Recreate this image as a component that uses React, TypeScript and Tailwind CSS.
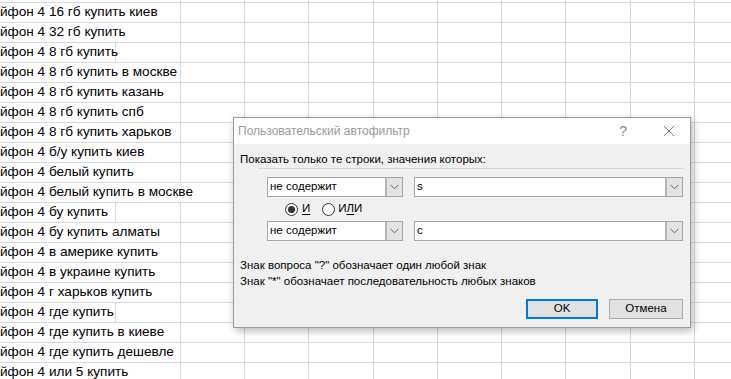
import React from "react";

const ROWS: { t: string; span: 1 | 2 | 3 }[] = [
  { t: "йфон 4 16 гб купить", span: 2 },
  { t: "йфон 4 16 гб купить киев", span: 2 },
  { t: "йфон 4 32 гб купить", span: 2 },
  { t: "йфон 4 8 гб купить", span: 1 },
  { t: "йфон 4 8 гб купить в москве", span: 2 },
  { t: "йфон 4 8 гб купить казань", span: 2 },
  { t: "йфон 4 8 гб купить спб", span: 2 },
  { t: "йфон 4 8 гб купить харьков", span: 2 },
  { t: "йфон 4 б/у купить киев", span: 2 },
  { t: "йфон 4 белый купить", span: 2 },
  { t: "йфон 4 белый купить в москве", span: 3 },
  { t: "йфон 4 бу купить", span: 1 },
  { t: "йфон 4 бу купить алматы", span: 2 },
  { t: "йфон 4 в америке купить", span: 2 },
  { t: "йфон 4 в украине купить", span: 2 },
  { t: "йфон 4 г харьков купить", span: 2 },
  { t: "йфон 4 где купить", span: 1 },
  { t: "йфон 4 где купить в киеве", span: 2 },
  { t: "йфон 4 где купить дешевле", span: 2 },
  { t: "йфон 4 или 5 купить", span: 2 },
];

// widths of the columns after A (B, C, D ...)
const COLS = ["w-[65px]", "w-[64px]", "w-[64px]", "w-[65px]", "w-[64px]", "w-[64px]", "w-[64px]", "w-[65px]", "w-[64px]", "w-[64px]"];
const FIRST: Record<number, string> = { 1: "w-[116px]", 2: "w-[181px]", 3: "w-[245px]" };

function Chevron() {
  return (
    <svg width="9" height="6" viewBox="0 0 9 6" fill="none">
      <path d="M0.5 0.8 L4.5 4.8 L8.5 0.8" stroke="#606060" strokeWidth="1" />
    </svg>
  );
}

function Combo({ value, w }: { value: string; w: string }) {
  return (
    <div className={`flex h-[20px] ${w} border border-[#a6a6a6] bg-white`}>
      <div className="flex flex-1 items-center pl-[2px] text-[11.5px] leading-none text-black">{value}</div>
      <div className="flex w-[17px] items-center justify-center border-l-2 border-[#b4b4b4] bg-[#e3e3e3]">
        <Chevron />
      </div>
    </div>
  );
}

function Radio({ on }: { on?: boolean }) {
  return (
    <span className="flex h-[13px] w-[13px] items-center justify-center rounded-full border border-[#333] bg-white">
      {on && <span className="h-[7px] w-[7px] rounded-full bg-[#333]" />}
    </span>
  );
}

export default function App() {
  return (
    <div className="relative h-[379px] w-[731px] overflow-hidden bg-white">
      <div className="-mt-[17px]" style={{ fontFamily: "'Liberation Sans', Arial, sans-serif" }}>
        {ROWS.map((r, i) => (
          <div key={i} className="flex h-[20px] border-b border-[#d3d8e4]">
            <div className={`${FIRST[r.span]} shrink-0 border-r border-[#d3d8e4] flex items-end pb-[2px] text-[13.6px] leading-[16px] text-black whitespace-nowrap`}>
              {r.t}
            </div>
            {COLS.slice(r.span - 1).map((c, j) => (
              <div key={j} className={`${c} shrink-0 border-r border-[#d3d8e4]`} />
            ))}
          </div>
        ))}
      </div>

      <div
        className="absolute left-[233px] top-[117px] flex h-[211px] w-[458px] flex-col border border-[#9a9a9a] bg-[#f0f0f0] shadow-[2px_3px_8px_rgba(0,0,0,0.28)]"
        style={{ fontFamily: "'Liberation Sans', Arial, sans-serif" }}
      >
        <div className="flex h-[26px] items-center bg-white pl-[4px] pr-[15px] text-[12px] text-[#9a9a9a]">
          <span className="flex-1">Пользовательский автофильтр</span>
          <span className="mr-[36px] text-[14px] text-[#8a8a8a]">?</span>
          <svg width="12" height="12" viewBox="0 0 12 12">
            <path d="M1 1 L11 11 M11 1 L1 11" stroke="#7a7a7a" strokeWidth="1" />
          </svg>
        </div>

        <div className="flex flex-col px-[6px]">
          <div className="mt-[7px] h-[16px] text-[11.5px] leading-[16px] text-black">
            Показать только те строки, значения которых:
          </div>
          <div className="ml-[18px] mt-[1px] h-px bg-[#d6d6d6]" />

          <div className="ml-[27px] mt-[8px] flex gap-[11px]">
            <Combo value="не содержит" w="w-[136px]" />
            <Combo value="s" w="w-[269px]" />
          </div>

          <div className="ml-[45px] mt-[4px] flex h-[16px] items-center text-[11.5px] text-black">
            <Radio on />
            <span className="ml-[4px] underline underline-offset-2">И</span>
            <span className="ml-[12px]">
              <Radio />
            </span>
            <span className="ml-[3px]">
              И<span className="underline underline-offset-2">Л</span>И
            </span>
          </div>

          <div className="ml-[27px] mt-[4px] flex gap-[11px]">
            <Combo value="не содержит" w="w-[136px]" />
            <Combo value="с" w="w-[269px]" />
          </div>

          <div className="mt-[16px] text-[11.5px] leading-[16px] text-black">
            <div>Знак вопроса "?" обозначает один любой знак</div>
            <div>Знак "*" обозначает последовательность любых знаков</div>
          </div>

          <div className="mt-[10px] flex justify-end gap-[11px] pr-[1px]">
            <button className="h-[20px] w-[72px] border-2 border-[#0078d7] bg-[#e1e1e1] text-[11.5px] leading-none text-black">
              OK
            </button>
            <button className="h-[20px] w-[74px] border border-[#adadad] bg-[#e1e1e1] text-[11.5px] leading-none text-black">
              Отмена
            </button>
          </div>
        </div>
      </div>
    </div>
  );
}
